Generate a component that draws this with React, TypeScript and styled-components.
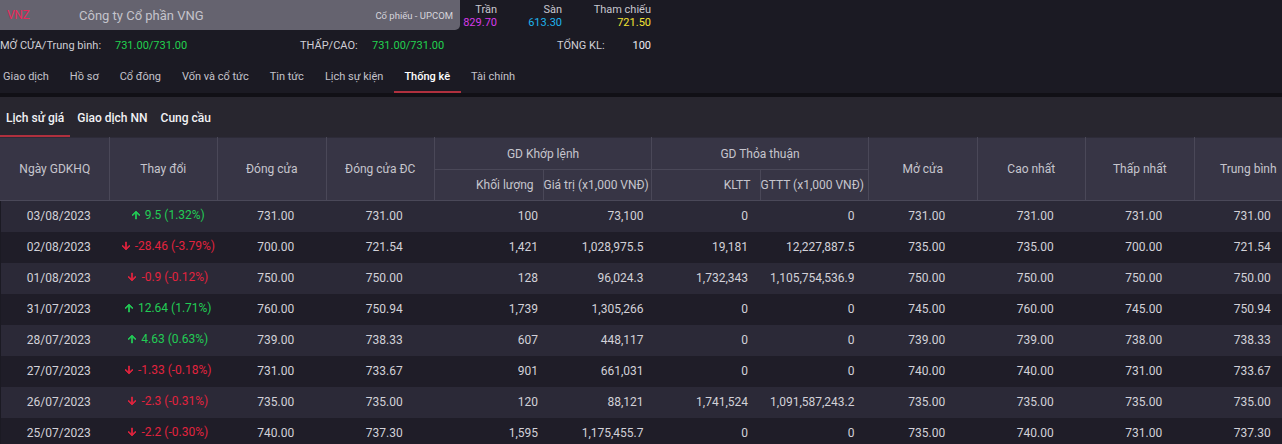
import React from "react";
import styled, { createGlobalStyle } from "styled-components";

const GlobalStyle = createGlobalStyle`
  html, body { margin: 0; padding: 0; background: #1b1a23; }
  body { font-family: Roboto, "Noto Sans", Arial, sans-serif; color: #d4d3da; overflow: hidden; }
  * { box-sizing: border-box; }
`;

const Page = styled.div`
  width: 1282px;
  height: 444px;
  overflow: hidden;
  background: #1b1a23;
`;

const TopRow = styled.div`
  display: flex;
  align-items: stretch;
  height: 30px;
`;

const CompanyBar = styled.div`
  width: 460px;
  background: #65636f;
  border-radius: 0 0 5px 0;
  display: flex;
  align-items: center;
  padding: 0 7px;
`;

const Ticker = styled.span`
  color: #e8285a;
  font-size: 12px;
  width: 72px;
  letter-spacing: -0.3px;
`;

const CompanyName = styled.span`
  color: #c4c3cb;
  font-size: 13px;
  flex: 1;
`;

const Exchange = styled.span`
  color: #d6d5dc;
  font-size: 9.5px;
`;

const PriceCol = styled.div<{ $w: number }>`
  width: ${(p) => p.$w}px;
  display: flex;
  flex-direction: column;
  align-items: flex-end;
  justify-content: center;
  font-size: 11px;
  line-height: 13px;
  padding-top: 1px;
`;

const PriceLabel = styled.span`
  color: #c8c7cf;
`;

const PriceValue = styled.span<{ $c: string }>`
  color: ${(p) => p.$c};
`;

const StatRow = styled.div`
  display: grid;
  grid-template-columns: 115px 185px 72px 185px 60px 34px;
  align-items: center;
  height: 30px;
  font-size: 11px;
`;

const StatLabel = styled.span`
  color: #d0cfd6;
  white-space: nowrap;
`;

const StatValue = styled.span<{ $c?: string; $right?: boolean }>`
  color: ${(p) => p.$c || "#ecebf0"};
  text-align: ${(p) => (p.$right ? "right" : "left")};
`;

const TabBar = styled.div`
  display: flex;
  height: 33px;
  margin-left: -7.5px;
  background: #1b1a23;
`;

const Tab = styled.div<{ $active?: boolean }>`
  display: flex;
  align-items: center;
  padding: 2px 10.5px 0;
  font-size: 11px;
  color: ${(p) => (p.$active ? "#ffffff" : "#c4c3cb")};
  font-weight: ${(p) => (p.$active ? 500 : 400)};
  border-bottom: 2px solid ${(p) => (p.$active ? "#b0303e" : "transparent")};
  white-space: nowrap;
`;

const Divider = styled.div`
  height: 4px;
  background: #111016;
`;

const SubTabBar = styled.div`
  display: flex;
  height: 40px;
  background: #28262f;
`;

const SubTab = styled.div<{ $active?: boolean }>`
  display: flex;
  align-items: center;
  padding: 3px 6px 0;
  margin-right: 1px;
  font-size: 12px;
  font-weight: 500;
  color: #f2f2f5;
  border-bottom: 2px solid ${(p) => (p.$active ? "#b0303e" : "transparent")};
`;

const TableWrap = styled.div`
  width: 100%;
  overflow: hidden;
`;

const Table = styled.table`
  width: 1302px;
  table-layout: fixed;
  border-collapse: collapse;
  font-size: 12px;
`;

const Th = styled.th<{ $align?: string; $h: number }>`
  height: ${(p) => p.$h}px;
  background: #373545;
  color: #c6c5cd;
  font-weight: 400;
  text-align: ${(p) => p.$align || "center"};
  padding: ${(p) => (p.$align === "right" ? "0 9px 0 0" : "0")};
  border: 1px solid #4a4858;
  border-top: 1px solid #2d2b38;
  white-space: nowrap;
  overflow: visible;
  &:first-child { border-left-color: #373545; }
`;

const Tr = styled.tr<{ $odd: boolean }>`
  height: 31px;
  background: ${(p) => (p.$odd ? "#2b2937" : "#1f1d28")};
`;

const Td = styled.td<{ $align?: string; $pr?: number }>`
  color: #d2d1d8;
  text-align: ${(p) => p.$align || "center"};
  padding: 0 ${(p) => p.$pr ?? 0}px 0 ${(p) => (p.$align === "right" ? 0 : 8)}px;
  white-space: nowrap;
`;

const Change = styled.span<{ $up: boolean }>`
  display: inline-flex;
  align-items: center;
  gap: 3px;
  color: ${(p) => (p.$up ? "#22cc55" : "#e2233e")};
`;

const Arrow = ({ up }: { up: boolean }) => (
  <svg width="12" height="12" viewBox="0 0 24 24" style={{ transform: up ? "none" : "rotate(180deg)" }}>
    <path d="M4 12l1.41 1.41L11 7.83V20h2V7.83l5.58 5.59L20 12l-8-8-8 8z" fill="currentColor" stroke="currentColor" strokeWidth="1.5" />
  </svg>
);

type Row = [string, boolean, string, string, string, string, string, string, string, string, string, string, string];

const rows: Row[] = [
  ["03/08/2023", true, "9.5 (1.32%)", "731.00", "731.00", "100", "73,100", "0", "0", "731.00", "731.00", "731.00", "731.00"],
  ["02/08/2023", false, "-28.46 (-3.79%)", "700.00", "721.54", "1,421", "1,028,975.5", "19,181", "12,227,887.5", "735.00", "735.00", "700.00", "721.54"],
  ["01/08/2023", false, "-0.9 (-0.12%)", "750.00", "750.00", "128", "96,024.3", "1,732,343", "1,105,754,536.9", "750.00", "750.00", "750.00", "750.00"],
  ["31/07/2023", true, "12.64 (1.71%)", "760.00", "750.94", "1,739", "1,305,266", "0", "0", "745.00", "760.00", "745.00", "750.94"],
  ["28/07/2023", true, "4.63 (0.63%)", "739.00", "738.33", "607", "448,117", "0", "0", "739.00", "739.00", "738.00", "738.33"],
  ["27/07/2023", false, "-1.33 (-0.18%)", "731.00", "733.67", "901", "661,031", "0", "0", "740.00", "740.00", "731.00", "733.67"],
  ["26/07/2023", false, "-2.3 (-0.31%)", "735.00", "735.00", "120", "88,121", "1,741,524", "1,091,587,243.2", "735.00", "735.00", "735.00", "735.00"],
  ["25/07/2023", false, "-2.2 (-0.30%)", "740.00", "737.30", "1,595", "1,175,455.7", "0", "0", "735.00", "740.00", "731.00", "737.30"],
];

const tabs = ["Giao dịch", "Hồ sơ", "Cổ đông", "Vốn và cổ tức", "Tin tức", "Lịch sự kiện", "Thống kê", "Tài chính"];

export default function App() {
  return (
    <Page>
      <GlobalStyle />
      <TopRow>
        <CompanyBar>
          <Ticker>VNZ</Ticker>
          <CompanyName>Công ty Cổ phần VNG</CompanyName>
          <Exchange>Cổ phiếu - UPCOM</Exchange>
        </CompanyBar>
        <PriceCol $w={37}>
          <PriceLabel>Trần</PriceLabel>
          <PriceValue $c="#d83ae8">829.70</PriceValue>
        </PriceCol>
        <PriceCol $w={65}>
          <PriceLabel>Sàn</PriceLabel>
          <PriceValue $c="#1eb4ee">613.30</PriceValue>
        </PriceCol>
        <PriceCol $w={89}>
          <PriceLabel>Tham chiếu</PriceLabel>
          <PriceValue $c="#f2e233">721.50</PriceValue>
        </PriceCol>
      </TopRow>
      <StatRow>
        <StatLabel>MỞ CỬA/Trung bình:</StatLabel>
        <StatValue $c="#22d24f">731.00/731.00</StatValue>
        <StatLabel>THẤP/CAO:</StatLabel>
        <StatValue $c="#22d24f">731.00/731.00</StatValue>
        <StatLabel>TỔNG KL:</StatLabel>
        <StatValue $right>100</StatValue>
      </StatRow>
      <TabBar>
        {tabs.map((t) => (
          <Tab key={t} $active={t === "Thống kê"}>{t}</Tab>
        ))}
      </TabBar>
      <Divider />
      <SubTabBar>
        <SubTab $active>Lịch sử giá</SubTab>
        <SubTab>Giao dịch NN</SubTab>
        <SubTab>Cung cầu</SubTab>
      </SubTabBar>
      <TableWrap>
        <Table>
          <colgroup>
            {Array.from({ length: 12 }).map((_, i) => (
              <col key={i} style={{ width: 108.5 }} />
            ))}
          </colgroup>
          <thead>
            <tr>
              <Th $h={32} rowSpan={2}>Ngày GDKHQ</Th>
              <Th $h={32} rowSpan={2}>Thay đổi</Th>
              <Th $h={32} rowSpan={2}>Đóng cửa</Th>
              <Th $h={32} rowSpan={2}>Đóng cửa ĐC</Th>
              <Th $h={32} colSpan={2}>GD Khớp lệnh</Th>
              <Th $h={32} colSpan={2}>GD Thỏa thuận</Th>
              <Th $h={32} rowSpan={2}>Mở cửa</Th>
              <Th $h={32} rowSpan={2}>Cao nhất</Th>
              <Th $h={32} rowSpan={2}>Thấp nhất</Th>
              <Th $h={32} rowSpan={2}>Trung bình</Th>
            </tr>
            <tr>
              <Th $h={31} $align="right">Khối lượng</Th>
              <Th $h={31} $align="right">Giá trị (x1,000 VNĐ)</Th>
              <Th $h={31} $align="right">KLTT</Th>
              <Th $h={31} $align="right">GTTT (x1,000 VNĐ)</Th>
            </tr>
          </thead>
          <tbody>
            {rows.map((r, i) => (
              <Tr key={r[0]} $odd={i % 2 === 0}>
                <Td>{r[0]}</Td>
                <Td>
                  <Change $up={r[1]}>
                    <Arrow up={r[1]} />
                    {r[2]}
                  </Change>
                </Td>
                <Td>{r[3]}</Td>
                <Td>{r[4]}</Td>
                <Td $align="right" $pr={5}>{r[5]}</Td>
                <Td $align="right" $pr={8}>{r[6]}</Td>
                <Td $align="right" $pr={12}>{r[7]}</Td>
                <Td $align="right" $pr={14}>{r[8]}</Td>
                <Td>{r[9]}</Td>
                <Td>{r[10]}</Td>
                <Td>{r[11]}</Td>
                <Td>{r[12]}</Td>
              </Tr>
            ))}
          </tbody>
        </Table>
      </TableWrap>
    </Page>
  );
}
